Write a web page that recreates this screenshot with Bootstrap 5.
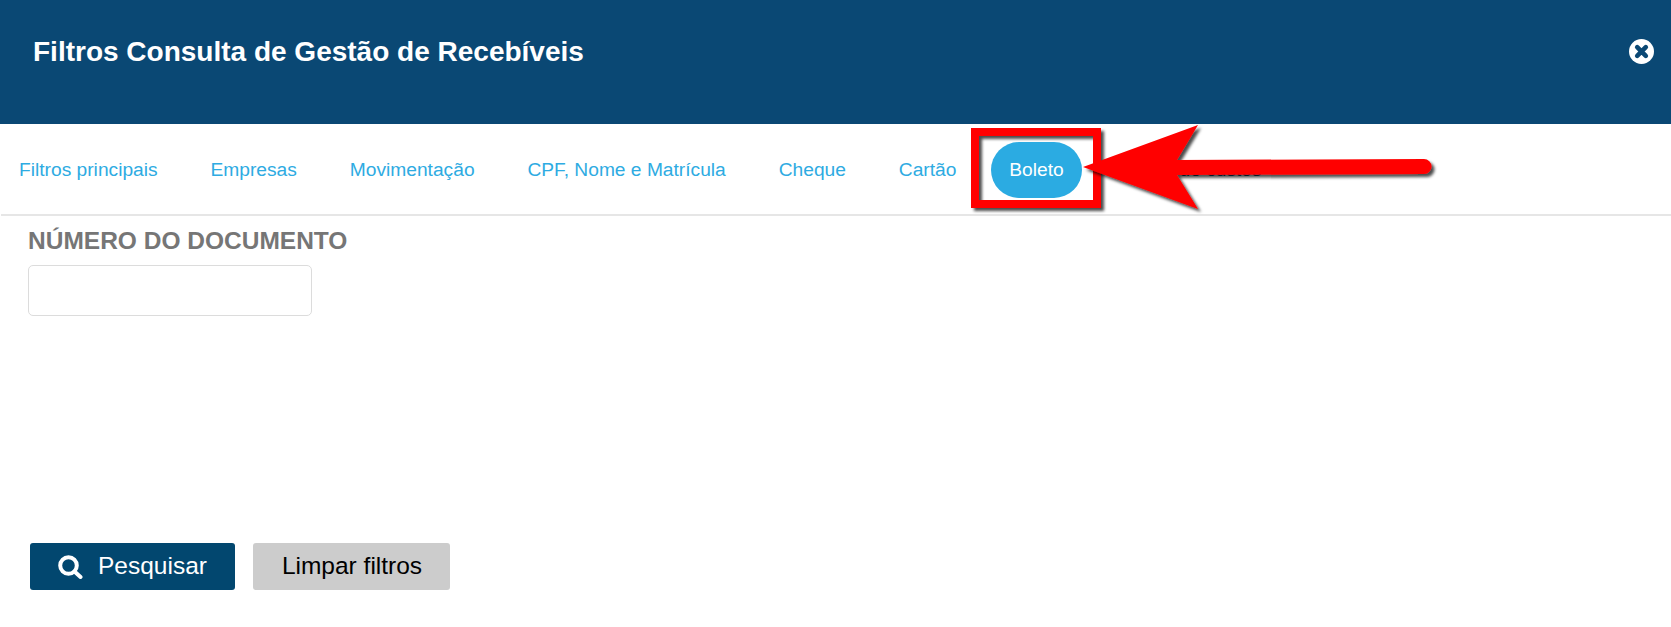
<!DOCTYPE html>
<html lang="pt-BR">
<head>
<meta charset="utf-8">
<title>Filtros</title>
<link href="https://cdn.jsdelivr.net/npm/bootstrap@5.3.0/dist/css/bootstrap.min.css" rel="stylesheet">
<style>
html,body{height:100%;}
body{font-family:"Liberation Sans",Arial,sans-serif;background:#fff;overflow:hidden;position:relative;}
.mhead{height:124px;background:#0a4874;color:#fff;padding:0 15px 0 33px;}
.mtitle{font-size:28px;font-weight:700;line-height:1;margin:0;padding-top:38px;}
.xbtn{width:25px;height:25px;margin-top:39px;margin-right:2px;display:block;}
.tabsbar{height:92px;border-bottom:2px solid #e6e6e6;margin-left:1px;padding-top:18px;}
.tabsbar .nav-link{color:#2eabe2;font-size:19.2px;line-height:56px;padding:0 18px;border-radius:28px;height:56px;}
.tabsbar .nav-item{margin-right:16.9px;}
.tabsbar .nav-link.active{background:#2babe2;color:#fff;}
.tabsbar .nav-link.dim{color:#0a4874;}
.bodyarea{padding:12px 0 0 28px;height:328px;}
.flabel{font-size:24.5px;font-weight:700;color:#767676;line-height:26px;margin:0 0 11px;display:block;}
.finput{width:284px;height:51px;border:1px solid #dcdcdc;border-radius:5px;box-shadow:none;}
.footbar{padding-left:30px;gap:18px;margin-top:-1px;}
.sbtn{height:47px;font-size:24.5px;line-height:1;border-radius:3px;border:0;padding:0;display:inline-flex;align-items:center;justify-content:center;}
.btnsearch{width:205px;background:#02476f;color:#fff;gap:15px;}
.btnsearch:hover{background:#02476f;color:#fff;}
.btnclear{width:197px;background:#ccc;color:#000;padding-left:1px;}
.btnclear:hover{background:#ccc;color:#000;}
.anno{position:absolute;left:0;top:0;pointer-events:none;}
</style>
</head>
<body>
<div class="mhead d-flex justify-content-between align-items-start">
  <h1 class="mtitle">Filtros Consulta de Gestão de Recebíveis</h1>
  <svg class="xbtn" viewBox="0 0 25 25" aria-label="Fechar"><circle cx="12.5" cy="12.5" r="12.5" fill="#fff"/><path d="M8.2 8.2l8.6 8.6M16.8 8.2l-8.6 8.6" stroke="#0a4874" stroke-width="4.6" stroke-linecap="round"/></svg>
</div>
<div class="tabsbar">
  <ul class="nav flex-nowrap">
    <li class="nav-item"><a class="nav-link" href="#">Filtros principais</a></li>
    <li class="nav-item"><a class="nav-link" href="#">Empresas</a></li>
    <li class="nav-item"><a class="nav-link" href="#">Movimentação</a></li>
    <li class="nav-item"><a class="nav-link" href="#">CPF, Nome e Matrícula</a></li>
    <li class="nav-item"><a class="nav-link" href="#">Cheque</a></li>
    <li class="nav-item"><a class="nav-link" href="#">Cartão</a></li>
    <li class="nav-item"><a class="nav-link active" href="#">Boleto</a></li>
    <li class="nav-item"><a class="nav-link dim" href="#">Centro de custos</a></li>
  </ul>
</div>
<div class="bodyarea">
  <label class="flabel" for="numdoc">NÚMERO DO DOCUMENTO</label>
  <input id="numdoc" class="form-control finput" type="text">
</div>
<div class="footbar d-flex">
  <button class="btn sbtn btnsearch" type="button">
    <svg width="25" height="24" viewBox="0 0 25 24"><circle cx="10.5" cy="10.5" r="8.3" fill="none" stroke="#fff" stroke-width="4"/><path d="M16.5 16.5l6 5.5" stroke="#fff" stroke-width="4" stroke-linecap="round"/></svg>
    <span>Pesquisar</span>
  </button>
  <button class="btn sbtn btnclear" type="button">Limpar filtros</button>
</div>
<svg class="anno" width="1671" height="627" viewBox="0 0 1671 627">
  <defs><filter id="sh" x="-10%" y="-30%" width="120%" height="160%"><feDropShadow dx="3" dy="3" stdDeviation="1.5" flood-color="#000" flood-opacity=".7"/></filter></defs>
  <rect x="975" y="132" width="122" height="72" fill="none" stroke="#f00" stroke-width="8" filter="url(#sh)"/>
  <path d="M1083 167L1198 125L1177 160L1424 159a7.5 7.5 0 0 1 0 15L1177 175L1198 209Z" fill="#f00" filter="url(#sh)"/>
</svg>
<script src="https://cdn.jsdelivr.net/npm/bootstrap@5.3.0/dist/js/bootstrap.bundle.min.js"></script>
</body>
</html>
